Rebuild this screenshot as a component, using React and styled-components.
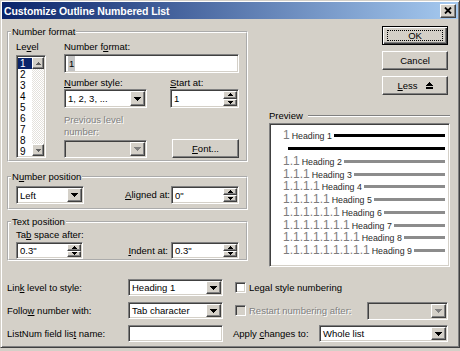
import React from "react";
import styled, { createGlobalStyle, css } from "styled-components";

const FACE = "#d4d0c8";
const SHADOW = "#808080";
const DARK = "#404040";
const HILITE = "#ffffff";

const GlobalStyle = createGlobalStyle`
  html, body { margin: 0; padding: 0; background: ${FACE}; }
  body {
    font-family: "Liberation Sans", Arial, sans-serif;
    font-size: 9.5px;
    color: #000;
  }
  * { box-sizing: border-box; }
`;

const raised = css`
  background: ${FACE};
  border: 1px solid;
  border-color: ${HILITE} ${DARK} ${DARK} ${HILITE};
  box-shadow: inset -1px -1px ${SHADOW}, inset 1px 1px ${FACE};
`;

const sunken = css`
  border: 1px solid;
  border-color: ${SHADOW} ${HILITE} ${HILITE} ${SHADOW};
  box-shadow: inset 1px 1px ${DARK}, inset -1px -1px ${FACE};
`;

const Window = styled.div`
  width: 460px;
  height: 348px;
  background: ${FACE};
  border: 1px solid;
  border-color: ${FACE} ${DARK} ${DARK} ${FACE};
  box-shadow: inset 1px 1px ${HILITE}, inset -1px -1px ${SHADOW};
  padding: 1px;
  display: flex;
  flex-direction: column;
`;

const TitleBar = styled.div`
  height: 17px;
  display: flex;
  align-items: center;
  padding: 0 2px 0 2px;
  background: linear-gradient(to right, #0a246a, #a6caf0);
`;

const Title = styled.div`
  color: #fff;
  font-weight: bold;
  font-size: 10.5px;
  letter-spacing: -0.1px;
  white-space: nowrap;
`;

const CloseButton = styled.div`
  ${raised};
  margin-left: auto;
  width: 16px;
  height: 14px;
  display: flex;
  align-items: center;
  justify-content: center;
`;

const Body = styled.div`
  flex: 1;
  padding: 7px 8px 0 5px;
  display: flex;
  flex-direction: column;
`;

const Top = styled.div`
  display: flex;
  gap: 21px;
`;

const LeftCol = styled.div`
  width: 241px;
  display: flex;
  flex-direction: column;
`;

const RightCol = styled.div`
  width: 181px;
  display: flex;
  flex-direction: column;
`;

const Group = styled.fieldset`
  margin: ${(p) => p.$mt || 0}px 0 0 0;
  border: 2px groove #fff;
  padding: ${(p) => p.$pad || "3px 7px 2px 7px"};
  min-width: 0;
`;

const Legend = styled.legend`
  font-size: 9.5px;
  line-height: 12px;
  padding: 0 1px;
  margin-left: -5px;
`;

const U = styled.span`
  text-decoration: underline;
`;

const Label = styled.div`
  line-height: 12px;
  white-space: nowrap;
  ${(p) =>
    p.$disabled &&
    css`
      color: ${SHADOW};
      text-shadow: 1px 1px 0 #fff;
    `}
`;

const InlineLabel = styled(Label)`
  margin-right: ${(p) => p.$mr || 2}px;
`;

const FormatGrid = styled.div`
  display: grid;
  grid-template-columns: 30px 175px;
  column-gap: 18px;
`;

const Stack = styled.div`
  display: flex;
  flex-direction: column;
  width: ${(p) => p.$w}px;
`;

const PairRow = styled.div`
  display: flex;
  justify-content: space-between;
  align-items: ${(p) => p.$align || "flex-start"};
  margin-top: ${(p) => p.$mt || 0}px;
`;

const Field = styled.div`
  ${sunken};
  width: ${(p) => p.$w}px;
  height: ${(p) => p.$h}px;
  margin-top: ${(p) => p.$mt || 0}px;
  background: ${(p) => (p.$disabled ? FACE : "#fff")};
  padding: 1px;
  display: flex;
  align-items: stretch;
  flex-shrink: 0;
`;

const FieldText = styled.div`
  flex: 1;
  display: flex;
  align-items: center;
  padding-left: 2px;
  white-space: nowrap;
  overflow: hidden;
`;

const FieldCode = styled.span`
  background: #c4c4c4;
  padding: 0 1px;
  align-self: stretch;
  display: flex;
  align-items: center;
`;

const DropBtn = styled.div`
  ${raised};
  width: 15px;
  display: flex;
  align-items: center;
  justify-content: center;
`;

const SpinCol = styled.div`
  width: 14px;
  display: flex;
  flex-direction: column;
`;

const SpinBtn = styled.div`
  ${raised};
  flex: 1;
  display: flex;
  align-items: center;
  justify-content: center;
`;

const PushButton = styled.div`
  ${raised};
  width: ${(p) => p.$w}px;
  height: ${(p) => p.$h}px;
  display: flex;
  align-items: center;
  justify-content: center;
  gap: 8px;
  white-space: nowrap;
`;

const DefaultButton = styled.div`
  width: 66px;
  height: 19px;
  background: ${FACE};
  border: 1px solid #000;
  box-shadow: inset 1px 1px ${HILITE}, inset -1px -1px ${DARK},
    inset -2px -2px ${SHADOW};
  padding: 3px 4px;
  display: flex;
`;

const FocusRing = styled.div`
  flex: 1;
  border: 1px dotted #000;
  display: flex;
  align-items: center;
  justify-content: center;
`;

const ButtonStack = styled.div`
  align-self: flex-end;
  margin-right: 2px;
  display: flex;
  flex-direction: column;
  gap: 6px;
`;

const ListBox = styled.div`
  ${sunken};
  background: #fff;
  margin-top: 2px;
  height: 103px;
  padding: 1px;
  display: flex;
`;

const ListItems = styled.div`
  flex: 1;
  display: flex;
  flex-direction: column;
  padding-top: 1px;
`;

const ListItem = styled.div`
  height: 11.1px;
  line-height: 11px;
  font-size: 10px;
  padding-left: 2px;
  background: ${(p) => (p.$selected ? "#0a246a" : "transparent")};
  color: ${(p) => (p.$selected ? "#fff" : "#000")};
`;

const VScroll = styled.div`
  width: 12px;
  display: flex;
  flex-direction: column;
`;

const ScrollBtn = styled.div`
  ${raised};
  height: 12px;
  display: flex;
  align-items: center;
  justify-content: center;
`;

const ScrollTrack = styled.div`
  flex: 1;
  background-color: #fff;
  background-image: conic-gradient(
    #e4e1dc 25%,
    #fff 0 50%,
    #e4e1dc 0 75%,
    #fff 0
  );
  background-size: 2px 2px;
`;

const PreviewHeader = styled.div`
  margin-top: 15px;
  display: flex;
  align-items: center;
  line-height: 12px;
`;

const Etch = styled.div`
  flex: 1;
  margin-left: 5px;
  height: 2px;
  border-top: 1px solid ${SHADOW};
  border-bottom: 1px solid ${HILITE};
`;

const PreviewBox = styled.div`
  ${sunken};
  margin-top: 1px;
  height: 144px;
  background: #fff;
  padding: 5px 4px 0 13px;
  display: flex;
  flex-direction: column;
`;

const PRow = styled.div`
  height: ${(p) => p.$h}px;
  display: flex;
  align-items: center;
`;

const NumGroup = styled.div`
  display: flex;
  align-items: baseline;
`;

const Num = styled.span`
  font-size: 12px;
  line-height: 11px;
  color: #7c7c7c;
`;

const HeadText = styled.span`
  font-size: 8.8px;
  line-height: 10px;
  color: #2a2a2a;
  margin-left: 2px;
`;

const Rule = styled.div`
  flex: 1;
  height: 3px;
  margin-left: ${(p) => p.$ml ?? 2}px;
  background: ${(p) => (p.$strong ? "#000" : "#8c8c8c")};
`;

const SpaceRow = styled.div`
  display: flex;
  justify-content: space-between;
  align-items: ${(p) => p.$align || "center"};
`;

const Inline = styled.div`
  display: flex;
  align-items: center;
`;

const BottomGrid = styled.div`
  margin-top: 12px;
  display: grid;
  grid-template-columns: 121px 95px 1fr;
  grid-auto-rows: 17px;
  row-gap: 6px;
  align-items: center;
`;

const RightCell = styled.div`
  display: flex;
  align-items: center;
  padding-left: ${(p) => p.$pl ?? 11}px;
  padding-right: 2px;
  height: 100%;
`;

const CheckBox = styled.div`
  ${sunken};
  width: 11px;
  height: 11px;
  margin-left: 1px;
  margin-right: 3px;
  background: ${(p) => (p.$disabled ? FACE : "#fff")};
`;

const Push = styled.div`
  margin-left: auto;
`;

/* ---------- drawings ---------- */

const Tri = ({ dir = "down", color = "#000", w = 7, h = 4 }) => (
  <svg width={w} height={h} viewBox={`0 0 ${w} ${h}`} shapeRendering="crispEdges">
    <polygon
      points={
        dir === "down"
          ? `0,0 ${w},0 ${w / 2},${h}`
          : `${w / 2},0 ${w},${h} 0,${h}`
      }
      fill={color}
    />
  </svg>
);

const CloseIcon = () => (
  <svg width="8" height="7" viewBox="0 0 8 7">
    <path d="M1 0.5 L7 6.5 M7 0.5 L1 6.5" stroke="#000" strokeWidth="1.8" />
  </svg>
);

const LessIcon = () => (
  <svg width="7" height="7" viewBox="0 0 7 7" shapeRendering="crispEdges">
    <polygon points="3.5,0 7,3.5 0,3.5" fill="#000" />
    <rect x="0" y="5" width="7" height="2" fill="#000" />
  </svg>
);

/* ---------- controls ---------- */

const Dropdown = ({ w, h, value, disabled, mt }) => (
  <Field $w={w} $h={h} $disabled={disabled} $mt={mt}>
    <FieldText>{value}</FieldText>
    <DropBtn>
      <Tri dir="down" color={disabled ? SHADOW : "#000"} />
    </DropBtn>
  </Field>
);

const Spin = ({ w, h, value, mt }) => (
  <Field $w={w} $h={h} $mt={mt}>
    <FieldText>{value}</FieldText>
    <SpinCol>
      <SpinBtn>
        <Tri dir="up" w={5} h={3} />
      </SpinBtn>
      <SpinBtn>
        <Tri dir="down" w={5} h={3} />
      </SpinBtn>
    </SpinCol>
  </Field>
);

const levels = [1, 2, 3, 4, 5, 6, 7, 8, 9];
const previewRows = [2, 3, 4, 5, 6, 7, 8, 9].map((n) => ({
  num: Array(n).fill("1").join("."),
  label: `Heading ${n}`,
}));

export default function App() {
  return (
    <>
      <GlobalStyle />
      <Window>
        <TitleBar>
          <Title>Customize Outline Numbered List</Title>
          <CloseButton aria-label="Close">
            <CloseIcon />
          </CloseButton>
        </TitleBar>
        <Body>
          <Top>
            <LeftCol>
              <Group>
                <Legend>Number format</Legend>
                <FormatGrid>
                  <Stack $w={30}>
                    <Label>
                      Le<U>v</U>el
                    </Label>
                    <ListBox>
                      <ListItems>
                        {levels.map((n) => (
                          <ListItem key={n} $selected={n === 1}>
                            {n}
                          </ListItem>
                        ))}
                      </ListItems>
                      <VScroll>
                        <ScrollBtn>
                          <Tri dir="up" w={5} h={3} color="#606060" />
                        </ScrollBtn>
                        <ScrollTrack />
                        <ScrollBtn>
                          <Tri dir="down" w={5} h={3} color="#606060" />
                        </ScrollBtn>
                      </VScroll>
                    </ListBox>
                  </Stack>
                  <Stack $w={175}>
                    <Label>
                      Number f<U>o</U>rmat:
                    </Label>
                    <Field $w={175} $h={19} $mt={1}>
                      <FieldText>
                        <FieldCode>1</FieldCode>
                      </FieldText>
                    </Field>
                    <PairRow $mt={4}>
                      <Stack $w={83}>
                        <Label>
                          <U>N</U>umber style:
                        </Label>
                        <Dropdown w={83} h={19} value="1, 2, 3, ..." />
                      </Stack>
                      <Stack $w={69}>
                        <Label>
                          <U>S</U>tart at:
                        </Label>
                        <Spin w={69} h={19} value="1" />
                      </Stack>
                    </PairRow>
                    <PairRow $mt={6} $align="flex-end">
                      <Stack $w={83}>
                        <Label $disabled>Previous level</Label>
                        <Label $disabled>number:</Label>
                        <Dropdown w={83} h={18} mt={2} disabled value="" />
                      </Stack>
                      <PushButton $w={67} $h={19}>
                        <span>
                          <U>F</U>ont...
                        </span>
                      </PushButton>
                    </PairRow>
                  </Stack>
                </FormatGrid>
              </Group>

              <Group $mt={9} $pad="3px 7px 4px 7px">
                <Legend>
                  N<U>u</U>mber position
                </Legend>
                <SpaceRow>
                  <Dropdown w={68} h={18} value="Left" />
                  <Inline>
                    <InlineLabel $mr={1}>
                      <U>A</U>ligned at:
                    </InlineLabel>
                    <Spin w={68} h={18} value={'0"'} />
                  </Inline>
                </SpaceRow>
              </Group>

              <Group $mt={6} $pad="1px 7px 0 7px">
                <Legend>Text position</Legend>
                <SpaceRow $align="flex-end">
                  <Stack $w={67}>
                    <Label>
                      Ta<U>b</U> space after:
                    </Label>
                    <Spin w={67} h={17} mt={1} value={'0.3"'} />
                  </Stack>
                  <Inline>
                    <InlineLabel $mr={3}>
                      <U>I</U>ndent at:
                    </InlineLabel>
                    <Spin w={68} h={17} value={'0.3"'} />
                  </Inline>
                </SpaceRow>
              </Group>
            </LeftCol>

            <RightCol>
              <ButtonStack>
                <DefaultButton>
                  <FocusRing>OK</FocusRing>
                </DefaultButton>
                <PushButton $w={66} $h={19}>
                  Cancel
                </PushButton>
                <PushButton $w={66} $h={19}>
                  <span>
                    <U>L</U>ess
                  </span>
                  <LessIcon />
                </PushButton>
              </ButtonStack>
              <PreviewHeader>
                <span>Preview</span>
                <Etch />
              </PreviewHeader>
              <PreviewBox>
                <PRow $h={12}>
                  <NumGroup>
                    <Num>1</Num>
                    <HeadText>Heading 1</HeadText>
                  </NumGroup>
                  <Rule $strong />
                </PRow>
                <PRow $h={14}>
                  <Rule $strong $ml={5} />
                </PRow>
                {previewRows.map((r) => (
                  <PRow key={r.label} $h={12.75}>
                    <NumGroup>
                      <Num>{r.num}</Num>
                      <HeadText>{r.label}</HeadText>
                    </NumGroup>
                    <Rule />
                  </PRow>
                ))}
              </PreviewBox>
            </RightCol>
          </Top>

          <BottomGrid>
            <Label>
              Lin<U>k</U> level to style:
            </Label>
            <Dropdown w={95} h={17} value="Heading 1" />
            <RightCell>
              <CheckBox />
              <Label>Legal style numbering</Label>
            </RightCell>

            <Label>
              Follo<U>w</U> number with:
            </Label>
            <Dropdown w={95} h={17} value="Tab character" />
            <RightCell>
              <CheckBox $disabled />
              <Label $disabled>Restart numbering after:</Label>
              <Push>
                <Dropdown w={81} h={18} disabled value="" />
              </Push>
            </RightCell>

            <Label>
              ListNum field lis<U>t</U> name:
            </Label>
            <Field $w={95} $h={17} />
            <RightCell $pl={10}>
              <Label>
                Apply <U>c</U>hanges to:
              </Label>
              <Push>
                <Dropdown w={129} h={17} value="Whole list" />
              </Push>
            </RightCell>
          </BottomGrid>
        </Body>
      </Window>
    </>
  );
}
